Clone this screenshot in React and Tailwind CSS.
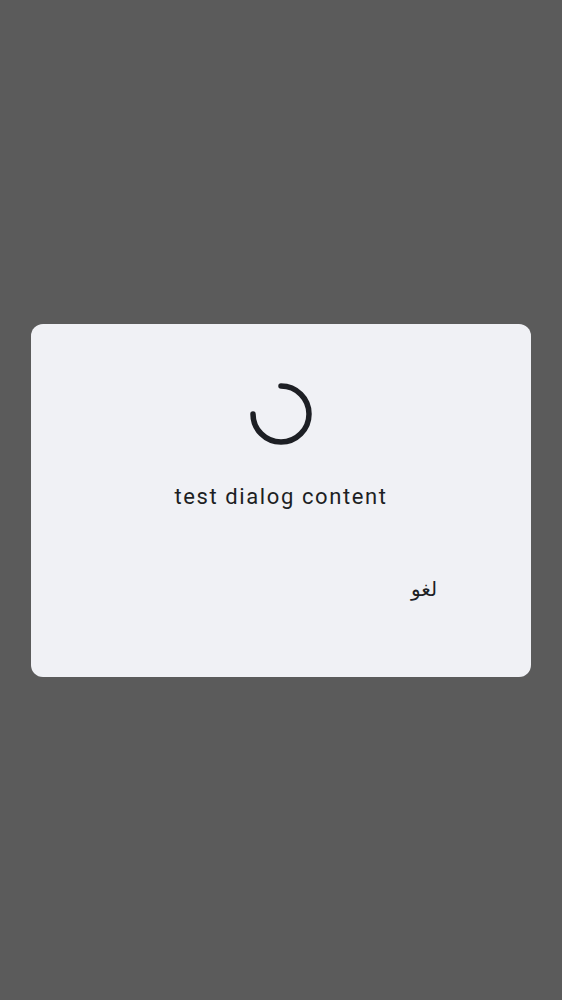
import React from 'react';

const Spinner = () => (
  <svg width="68" height="68" viewBox="0 0 68 68" className="block">
    <path
      d="M34 6 A28 28 0 1 1 6 34"
      fill="none"
      stroke="#1d1f24"
      strokeWidth="5.5"
      strokeLinecap="round"
    />
  </svg>
);

export default function App() {
  return (
    <div className="min-h-screen w-full bg-[#5b5b5b] flex items-center justify-center">
      <div className="w-[500px] h-[353px] bg-[#f0f1f5] rounded-[12px] flex flex-col items-center pt-[56px] font-['Roboto',sans-serif]">
        <Spinner />
        <p className="mt-[34px] text-[22px] leading-[30px] tracking-[1.6px] text-[#1d1f24]">
          test dialog content
        </p>
        <div className="w-full flex justify-end pr-[78px] mt-[57px]">
          <button className="px-[16px] h-[40px] text-[20px] text-[#1d1f24] font-['DejaVu_Sans',sans-serif]">
            لغو
          </button>
        </div>
      </div>
    </div>
  );
}
